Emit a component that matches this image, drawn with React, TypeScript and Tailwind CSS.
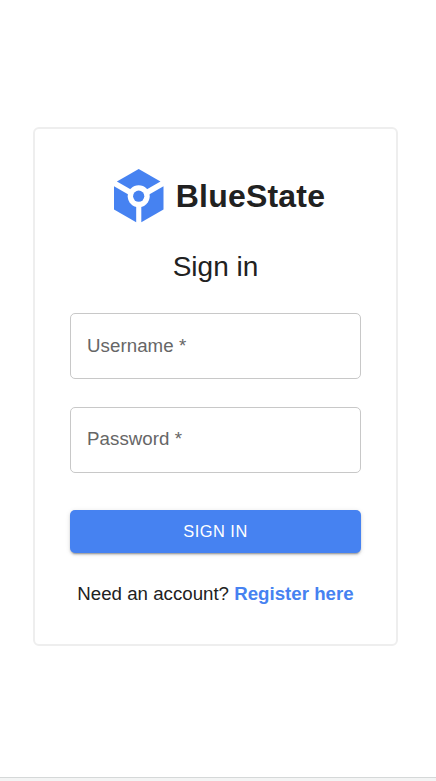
function Logo() {
  return (
    <svg width="50" height="54" viewBox="0 0 50 54" fill="none" className="shrink-0">
      <path d="M24.7 0 L46.5 12.5 L24.7 25.1 L2.9 12.5 Z" fill="#4682f1" />
      <path d="M0 17.2 L22.2 30 V53.2 L0 40.5 Z" fill="#4682f1" />
      <path d="M49.5 17.2 L27.3 30 V53.2 L49.5 40.5 Z" fill="#4682f1" />
      <circle cx="24.7" cy="27.2" r="11" fill="white" />
      <circle cx="24.7" cy="27.2" r="5.6" fill="#4682f1" />
    </svg>
  );
}

function Field({ label, className = "" }: { label: string; className?: string }) {
  return (
    <div
      className={`flex h-[66px] w-full items-center rounded-[5px] border border-[#c8c8c8] px-4 text-[18.7px] tracking-[0.06px] text-[#666666] ${className}`}
    >
      {label}
    </div>
  );
}

export default function App() {
  return (
    <div className="flex h-[781px] w-full flex-col bg-white font-['Liberation_Sans',Arial,sans-serif] text-[#212121]">
      <main className="flex-1 pl-[33px] pt-[127px]">
        <section className="flex h-[519px] w-[365px] flex-col items-center rounded-[6px] border-2 border-[#eeeeee] px-[35px] pt-[39px]">
          <div className="flex h-[56px] items-center gap-3 pl-2">
            <Logo />
            <h1 className="text-[32px] font-bold leading-[40px] tracking-[0.2px]">BlueState</h1>
          </div>
          <h2 className="mt-[25px] text-[28px] leading-[36px]">Sign in</h2>
          <div className="mt-[28px] flex w-full flex-col gap-7">
            <Field label="Username *" />
            <Field label="Password *" className="pb-0.5" />
          </div>
          <button className="mt-[37px] h-[43px] w-full rounded-[5px] bg-[#4682f1] text-[16.4px] tracking-[0.5px] text-white shadow-[0_3px_1px_-2px_rgba(0,0,0,0.2),0_2px_2px_0_rgba(0,0,0,0.14),0_1px_5px_0_rgba(0,0,0,0.12)]">
            SIGN IN
          </button>
          <p className="mt-[29px] whitespace-nowrap text-[18.7px] leading-6">
            Need an account? <a className="font-bold text-[#4682f1]">Register here</a>
          </p>
        </section>
      </main>
      <footer className="h-1 border-t border-[#d5d8d8] bg-[#f3f4f4]" />
    </div>
  );
}
